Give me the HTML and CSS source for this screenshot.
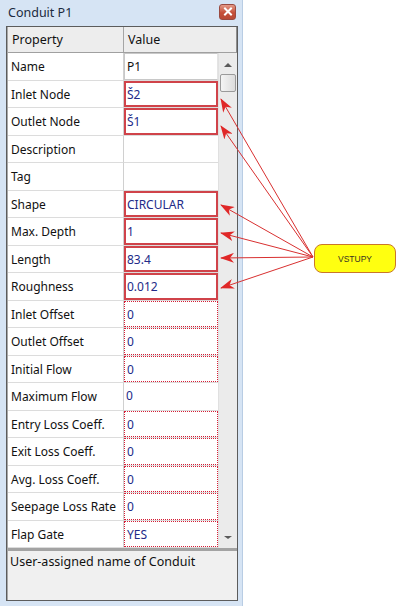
FILE: index.html
```html
<!DOCTYPE html>
<html lang="en">
<head>
    <meta charset="UTF-8">
    <meta name="viewport" content="width=device-width, initial-scale=1.0">
    <title>Conduit P1</title>
    <link rel="stylesheet" href="styles.css">
</head>
<body>
    <div class="page">
        <div class="window">
            <div class="titlebar">
                <span class="title">Conduit P1</span>
                <span class="close">
                    <svg width="10" height="9" viewBox="0 0 10 9"><path d="M2 1.5 L8 7.5 M8 1.5 L2 7.5" stroke="#fff" stroke-width="2" stroke-linecap="square"/></svg>
                </span>
            </div>
            <div class="client">
                <div class="head">
                    <div class="hcell">Property</div>
                    <div class="hcell hvalue">Value</div>
                </div>
                <div class="body">
                    <div class="table">
                        <div class="row"><div class="prop">Name</div><div class="val"><span class="box edit plain">P1</span></div></div>
                        <div class="row"><div class="prop">Inlet Node</div><div class="val"><span class="box solid">Š2</span></div></div>
                        <div class="row"><div class="prop">Outlet Node</div><div class="val"><span class="box solid">Š1</span></div></div>
                        <div class="row"><div class="prop">Description</div><div class="val"><span class="box"></span></div></div>
                        <div class="row"><div class="prop">Tag</div><div class="val"><span class="box"></span></div></div>
                        <div class="row"><div class="prop">Shape</div><div class="val"><span class="box solid">CIRCULAR</span></div></div>
                        <div class="row"><div class="prop">Max. Depth</div><div class="val"><span class="box solid">1</span></div></div>
                        <div class="row"><div class="prop">Length</div><div class="val"><span class="box solid">83.4</span></div></div>
                        <div class="row"><div class="prop">Roughness</div><div class="val"><span class="box solid">0.012</span></div></div>
                        <div class="row"><div class="prop">Inlet Offset</div><div class="val"><span class="box dotted">0</span></div></div>
                        <div class="row"><div class="prop">Outlet Offset</div><div class="val"><span class="box dotted">0</span></div></div>
                        <div class="row"><div class="prop">Initial Flow</div><div class="val"><span class="box dotted">0</span></div></div>
                        <div class="row"><div class="prop">Maximum Flow</div><div class="val"><span class="box">0</span></div></div>
                        <div class="row"><div class="prop">Entry Loss Coeff.</div><div class="val"><span class="box dotted">0</span></div></div>
                        <div class="row"><div class="prop">Exit Loss Coeff.</div><div class="val"><span class="box dotted">0</span></div></div>
                        <div class="row"><div class="prop">Avg. Loss Coeff.</div><div class="val"><span class="box dotted">0</span></div></div>
                        <div class="row"><div class="prop">Seepage Loss Rate</div><div class="val"><span class="box dotted">0</span></div></div>
                        <div class="row"><div class="prop">Flap Gate</div><div class="val"><span class="box dotted">YES</span></div></div>
                    </div>
                    <div class="scrollbar">
                        <span class="arrow up"></span>
                        <span class="thumb"></span>
                        <span class="track"></span>
                        <span class="arrow down"></span>
                    </div>
                </div>
                <div class="splitter"></div>
                <div class="status">User-assigned name of Conduit</div>
            </div>
        </div>
    </div>

    <!-- callout drawn over the window -->
    <div class="callout">VSTUPY</div>
    <svg class="arrows" width="396" height="606" viewBox="0 0 396 606">
        <defs>
            <marker id="head" markerWidth="14" markerHeight="10" refX="13" refY="5" orient="auto" markerUnits="userSpaceOnUse">
                <path d="M0 0 L14 5 L0 10 L4 5 Z" fill="#e02828"/>
            </marker>
        </defs>
        <g stroke="#d83030" stroke-width="1" marker-end="url(#head)">
            <line x1="313" y1="257" x2="221" y2="99"/>
            <line x1="313" y1="257" x2="221" y2="126"/>
            <line x1="313" y1="257" x2="221" y2="205"/>
            <line x1="313" y1="257" x2="221" y2="233"/>
            <line x1="313" y1="257" x2="221" y2="258"/>
            <line x1="313" y1="257" x2="221" y2="288"/>
        </g>
    </svg>
</body>
</html>
```

FILE: styles.css
```css
* {
    padding: 0;
    margin: 0;
    box-sizing: border-box;
}
body {
    background-color: #fff;
    font-family: "Noto Sans", "Open Sans", sans-serif;
    font-size: 12px;
    color: #111;
    position: relative;
    width: 396px;
    height: 606px;
    overflow: hidden;
}
.page {
    display: flex;
}
.window {
    width: 243px;
    height: 606px;
    background-color: #d6e4f4;
    border-right: 1px solid #b9cde4;
    padding: 0 4px 5px 6px;
    display: flex;
    flex-direction: column;
}
.titlebar {
    height: 26px;
    display: flex;
    align-items: center;
    justify-content: space-between;
    padding: 0 2px 2px 2px;
}
.title {
    color: #1b2a40;
    font-size: 12.5px;
}
.close {
    width: 17px;
    height: 16px;
    border-radius: 3px;
    border: 1px solid #9a4a40;
    background: linear-gradient(#e39a88, #c5503a 55%, #b84a36);
    display: flex;
    align-items: center;
    justify-content: center;
    margin-bottom: 1px;
}
.client {
    flex: 1;
    background-color: #f0f0f0;
    border: 1px solid #5c5c5c;
    box-shadow: inset 1px 1px 0 #a8a8a8;
    display: flex;
    flex-direction: column;
}
.head {
    height: 26px;
    display: grid;
    grid-template-columns: 115px 1fr;
    background-color: #ededed;
    border-bottom: 1px solid #a0a0a0;
    border-right: 1px solid #8e8e8e;
    margin-left: 1px;
}
.hcell {
    padding: 4px 0 0 4px;
    font-size: 12.5px;
}
.hvalue {
    border-left: 1px solid #a5a5a5;
}
.body {
    display: flex;
    background-color: #fff;
    margin-left: 1px;
}
.table {
    width: 210px;
}
.row {
    height: 27.5px;
    display: grid;
    grid-template-columns: 115px 95px;
}
.prop {
    padding: 5px 0 0 3px;
    border-bottom: 1px solid #dcdcdc;
    white-space: nowrap;
}
.val {
    border-left: 1px solid #d0d0d0;
    border-bottom: 1px solid #dcdcdc;
    display: flex;
}
.box {
    flex: 1;
    padding: 4px 0 0 2px;
    color: #222a88;
}
.box.plain {
    color: #111;
}
.box.edit {
    border: 1px solid #c8c8c8;
    border-right-color: #e4e4e4;
}
.box.solid {
    border: 2px solid #d0434a;
    padding: 3px 0 0 1px;
}
.box.dotted {
    border: 1px dotted #d41e36;
}
.scrollbar {
    width: 19px;
    background-color: #ebebeb;
    border-left: 1px solid #e0e0e0;
    display: flex;
    flex-direction: column;
    align-items: center;
}
.arrow {
    width: 0;
    height: 0;
    border-left: 4px solid transparent;
    border-right: 4px solid transparent;
}
.arrow.up {
    border-bottom: 4px solid #5a5a5a;
    margin-top: 10px;
}
.arrow.down {
    border-top: 3px solid #5a5a5a;
    margin-bottom: 9px;
}
.thumb {
    width: 16px;
    height: 18px;
    margin-top: 7px;
    border: 1px solid #9a9a9a;
    border-radius: 2px;
    background: linear-gradient(90deg, #f4f4f4, #dcdcdc);
}
.track {
    flex: 1;
}
.splitter {
    height: 3px;
    background-color: #a3a3a3;
    margin-left: 1px;
}
.status {
    flex: 1;
    padding: 2px 0 0 2px;
    font-size: 12.5px;
    margin-left: 1px;
}
.callout {
    position: absolute;
    left: 314px;
    top: 244px;
    width: 82px;
    height: 29px;
    background-color: #ffff10;
    border: 1px solid #c9772a;
    border-radius: 8px;
    font-family: "Liberation Sans", sans-serif;
    font-size: 8.5px;
    color: #3a3320;
    display: flex;
    align-items: center;
    justify-content: center;
}
.arrows {
    position: absolute;
    left: 0;
    top: 0;
    pointer-events: none;
}
```
